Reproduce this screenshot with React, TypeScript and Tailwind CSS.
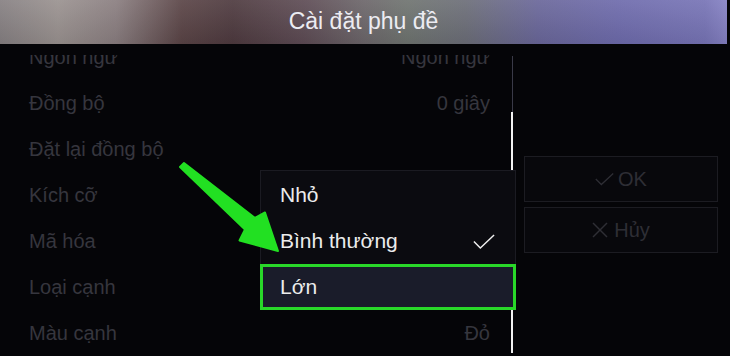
import React from "react";

const rows = [
  { label: "Ngôn ngữ", value: "Ngôn ngữ" },
  { label: "Đồng bộ", value: "0 giây" },
  { label: "Đặt lại đồng bộ", value: "" },
  { label: "Kích cỡ", value: "" },
  { label: "Mã hóa", value: "" },
  { label: "Loại cạnh", value: "" },
  { label: "Màu cạnh", value: "Đỏ" },
];

const sizes = ["Nhỏ", "Bình thường", "Lớn"];

function CheckMark({ className }: { className?: string }) {
  return (
    <svg viewBox="0 0 24 16" className={className} fill="none" stroke="currentColor" strokeWidth="1.6">
      <polyline points="1,8 8,15 23,1" />
    </svg>
  );
}

function Cross({ className }: { className?: string }) {
  return (
    <svg viewBox="0 0 16 16" className={className} fill="none" stroke="currentColor" strokeWidth="1.4">
      <line x1="1" y1="1" x2="15" y2="15" />
      <line x1="15" y1="1" x2="1" y2="15" />
    </svg>
  );
}

export default function App() {
  return (
    <div className="relative w-[730px] h-[356px] overflow-hidden bg-[#050508] font-['Liberation_Sans',Arial,sans-serif]">
      {/* Title bar */}
      <div className="relative z-10 w-[727px] h-[44px] bg-[linear-gradient(90deg,#868082_0%,#9a9290_8%,#8a7e80_16%,#5a4446_25%,#4e3a3f_32%,#5e4c55_42%,#6c666a_50%,#6f7470_56%,#6c6e78_64%,#6a679a_74%,#6e6bac_85%,#7774b6_97%,#8682c4_100%)]">
        <div className="absolute inset-0 bg-[linear-gradient(180deg,rgba(255,255,255,0.08),rgba(0,0,0,0.08))]" />
        <div className="relative flex h-full items-center justify-center pb-[2px] text-[23px] text-[#ececf2]">
          Cài đặt phụ đề
        </div>
      </div>

      <div className="flex">
        {/* Settings list */}
        <div className="flex w-[516px]">
          <div className="mt-[11px] h-[301px] w-[490px] overflow-hidden">
            <div className="-mt-[21px] pl-[29px]">
              {rows.map((row) => (
                <div key={row.label} className="flex h-[46px] items-center justify-between text-[20px] text-[#36363e]">
                  <span>{row.label}</span>
                  <span>{row.value}</span>
                </div>
              ))}
            </div>
          </div>
          {/* Scrollbar */}
          <div className="ml-[21px] mt-[12px] flex w-[2px] flex-col items-center">
            <div className="h-[56px] w-px bg-[#3a3a48]" />
            <div className="h-[241px] w-[2px] bg-[#f2f2f2]" />
          </div>
        </div>

        {/* Buttons */}
        <div className="ml-[8px] mt-[112px] flex w-[194px] flex-col gap-[5px]">
          <div className="flex h-[46px] items-center justify-center gap-[4px] border border-[#1c1c22] bg-[#08080c] text-[20px] text-[#2e2e35]">
            <CheckMark className="w-[19px] h-[14px]" />
            <span>OK</span>
          </div>
          <div className="flex h-[46px] items-center justify-center gap-[6px] border border-[#1c1c22] bg-[#08080c] text-[20px] text-[#2e2e35]">
            <Cross className="w-[16px] h-[16px]" />
            <span>Hủy</span>
          </div>
        </div>
      </div>

      {/* Size dropdown */}
      <div className="absolute left-[260px] top-[170px] w-[256px] border-t border-x border-[#1b1b22] bg-[#0b0b10] text-[21px] text-[#ececec]">
        <div className="flex h-[47px] items-center pl-[19px]">{sizes[0]}</div>
        <div className="flex h-[46px] items-center justify-between pl-[19px] pr-[20px]">
          <span>{sizes[1]}</span>
          <CheckMark className="w-[22px] h-[15px] text-[#f0f0f0]" />
        </div>
        <div className="-mx-px flex h-[46px] items-center border-[3px] border-[#29d829] bg-[#1a1c2a] pl-[17px]">
          {sizes[2]}
        </div>
      </div>

      {/* Pointer arrow */}
      <svg className="pointer-events-none absolute inset-0 h-[356px] w-[730px]" viewBox="0 0 730 356">
        <polygon
          points="184,163 255,218 265,212.5 278,251 239.5,240.5 245,229.5 180,167"
          fill="#22e022"
          stroke="#22e022"
          strokeWidth="2"
          strokeLinejoin="round"
        />
      </svg>
    </div>
  );
}
